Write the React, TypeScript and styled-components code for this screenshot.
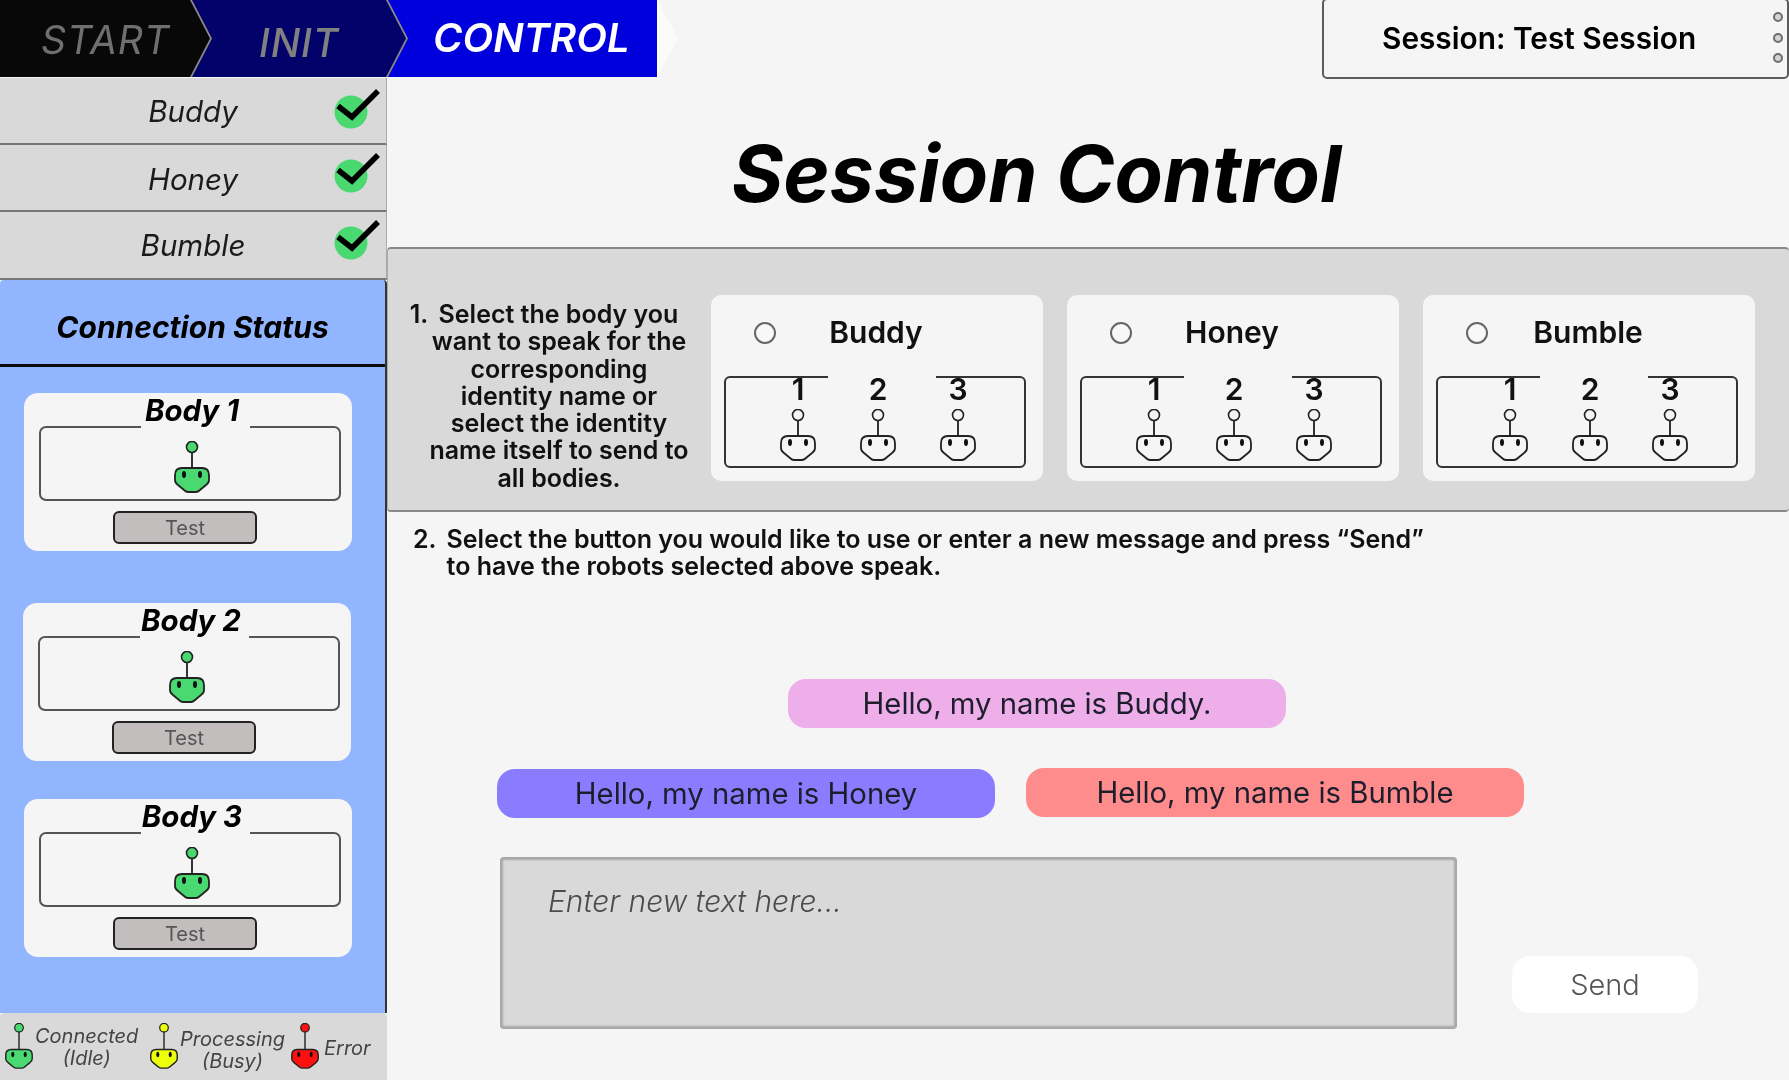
import React from "react";
import styled, { createGlobalStyle } from "styled-components";

const GlobalStyle = createGlobalStyle`
  html, body {
    margin: 0;
    padding: 0;
    background: #f5f5f5;
  }
  * {
    box-sizing: border-box;
  }
`;

const Page = styled.div`
  width: 1789px;
  height: 1080px;
  overflow: hidden;
  display: flex;
  flex-direction: column;
  background: #f5f5f5;
  color: #000;
  font-family: Inter, "Liberation Sans", sans-serif;
  filter: blur(0.6px);
`;

const TopBar = styled.header`
  height: 78px;
  flex: none;
  display: flex;
  justify-content: space-between;
  align-items: flex-start;
`;

const Steps = styled.nav`
  display: flex;
  height: 78px;
`;

/* the grey colour behind each step shows through as the chevron outline */
const Step = styled.div<{ $width: number; $offset: number; $bg: string; $color: string; $textLeft: number; $textTop: number; $size: number; $weight: number; $z: number }>`
  position: relative;
  width: ${(p) => p.$width}px;
  margin-left: ${(p) => p.$offset}px;
  height: 77px;
  z-index: ${(p) => p.$z};
  background: #8a8a8a;
  clip-path: polygon(0 0, calc(100% - 20px) 0, 100% 50%, calc(100% - 20px) 100%, 0 100%);
  color: ${(p) => p.$color};
  font-style: italic;
  font-size: ${(p) => p.$size}px;
  font-weight: ${(p) => p.$weight};
  letter-spacing: 1px;

  &::before {
    content: "";
    position: absolute;
    inset: 0 2px 0 0;
    background: ${(p) => p.$bg};
    clip-path: polygon(0 0, calc(100% - 20px) 0, 100% 50%, calc(100% - 20px) 100%, 0 100%);
  }

  span {
    position: absolute;
    left: ${(p) => p.$textLeft}px;
    top: ${(p) => p.$textTop}px;
    line-height: 1;
  }
`;

const LastStep = styled.div`
  width: 292px;
  margin-left: -22px;
  height: 77px;
  padding: 15px 0 0 47px;
  background: linear-gradient(90deg, #0000dc 271px, #fbfbfb 271px);
  clip-path: polygon(0 0, 271px 0, 100% 50%, 271px 100%, 0 100%);
  color: #fff;
  font-style: italic;
  font-weight: 600;
  font-size: 40px;
  line-height: 45px;
`;

const SessionBox = styled.div`
  width: 467px;
  height: 81px;
  margin-top: -2px;
  position: relative;
  display: flex;
  align-items: center;
  padding: 0 0 2px 58px;
  border: 2px solid #5c5c5c;
  border-radius: 5px;
  font-size: 29.8px;
  font-weight: 600;
`;

const MenuDots = styled.div`
  position: absolute;
  right: 4px;
  top: 12px;
  display: flex;
  flex-direction: column;
  gap: 10.5px;

  i {
    display: block;
    width: 10px;
    height: 10px;
    border-radius: 50%;
    background: #d4d4d4;
    border: 2px solid #6d6d6d;
  }
`;

const Content = styled.div`
  flex: 1;
  display: flex;
  min-height: 0;
`;

const Sidebar = styled.aside`
  width: 387px;
  flex: none;
  display: flex;
  flex-direction: column;
`;

const IdentityRow = styled.div<{ $height: number; $checkUp: number; $textDrop: number }>`
  height: ${(p) => p.$height}px;
  flex: none;
  display: grid;
  grid-template-columns: 1fr auto 1fr;
  align-items: center;
  background: #d9d9d9;
  border-bottom: 2px solid #777;
  border-right: 1px solid #aaa;
  font-size: 29.5px;
  font-style: italic;
  color: #1b1b1b;

  span {
    margin-top: ${(p) => p.$textDrop}px;
  }

  svg {
    justify-self: end;
    margin-right: 6px;
    margin-bottom: ${(p) => p.$checkUp * 2}px;
  }
`;

const StatusPanel = styled.div`
  flex: 1;
  min-height: 0;
  background: #91b5ff;
  border-right: 2px solid #333;
  border-radius: 4px 4px 0 0;
`;

const StatusTitle = styled.h2`
  margin: 0;
  height: 87px;
  display: flex;
  align-items: center;
  justify-content: center;
  padding-top: 10px;
  border-bottom: 3px solid #0a0a0a;
  font-size: 30px;
  font-weight: 700;
  font-style: italic;
`;

const BodyCard = styled.section<{ $top: number; $left: number; $robotShift: number }>`
  width: 328px;
  height: 158px;
  margin: ${(p) => p.$top}px 0 0 ${(p) => p.$left}px;
  padding: 0 11px 0 15px;
  background: #f5f5f5;
  border-radius: 14px;
  display: flex;
  flex-direction: column;
  align-items: center;

  svg {
    margin-left: ${(p) => p.$robotShift}px;
  }
`;

const BodyTitle = styled.h3`
  margin: 0 0 -2px 10px;
  width: 109px;
  height: 35px;
  padding-right: 6px;
  position: relative;
  z-index: 1;
  background: #f5f5f5;
  text-align: center;
  white-space: nowrap;
  font-size: 29.5px;
  line-height: 34px;
  font-weight: 700;
  font-style: italic;
`;

const BodyFrame = styled.div`
  width: 302px;
  height: 75px;
  flex: none;
  padding-top: 13px;
  display: flex;
  justify-content: center;
  border: 2px solid #555;
  border-radius: 7px;
`;

const TestButton = styled.button`
  width: 144px;
  height: 33px;
  margin: 10px 0 0 -10px;
  padding: 0;
  background: #c2bebe;
  border: 2px solid #222;
  border-radius: 6px;
  color: #555;
  font-family: inherit;
  font-size: 20px;
`;

const Legend = styled.footer`
  height: 67px;
  flex: none;
  display: flex;
  padding-left: 5px;
  background: #d9d9d9;
  border-radius: 4px 4px 0 0;
`;

const LegendItem = styled.div<{ $width: number; $drop: number; $gap: number }>`
  width: ${(p) => p.$width}px;
  padding-top: 10px;
  display: flex;
  align-items: flex-start;
  font-size: 20px;
  line-height: 22px;
  font-style: italic;
  color: #444;
  text-align: center;

  span {
    display: block;
    margin-top: ${(p) => p.$drop}px;
    margin-left: ${(p) => p.$gap}px;
  }
`;

const Main = styled.main`
  flex: 1;
  min-width: 0;
  display: flex;
  flex-direction: column;
`;

const Title = styled.h1`
  margin: 0;
  height: 169px;
  flex: none;
  padding: 20px 103px 0 0;
  display: flex;
  align-items: center;
  justify-content: center;
  font-size: 79px;
  font-weight: 700;
  font-style: italic;
`;

const SelectPanel = styled.section`
  height: 265px;
  flex: none;
  display: flex;
  align-items: center;
  padding: 16px 0 0 21px;
  background: #d9d9d9;
  border-top: 2px solid #888;
  border-bottom: 2px solid #888;
  border-left: 1px solid #aaa;
  border-radius: 4px;
`;

const StepOne = styled.p`
  width: 300px;
  margin: 18px 2px 0 0;
  flex: none;
  text-align: center;
  white-space: nowrap;
  font-size: 25px;
  line-height: 27.2px;
  font-weight: 600;
  color: #111;

  span {
    margin-right: 30px;
  }

  b {
    font-weight: inherit;
    margin-right: 4px;
  }
`;

const IdentityCards = styled.div`
  display: flex;
  gap: 24px;
`;

const IdentityCard = styled.div`
  width: 332px;
  height: 186px;
  padding: 0 15px 0 13px;
  background: #f5f5f5;
  border-radius: 10px;
`;

const CardHead = styled.div`
  height: 81px;
  display: grid;
  grid-template-columns: 1fr auto 1fr;
  align-items: center;
  padding-bottom: 6px;
  font-size: 30px;
  font-weight: 600;
  color: #111;
`;

const Radio = styled.span`
  width: 22px;
  height: 22px;
  margin-left: 30px;
  margin-top: 2px;
  border: 2px solid #666;
  border-radius: 50%;
  background: #f8f8f8;
`;

const RobotFrame = styled.div`
  position: relative;
  width: 302px;
  height: 92px;
  padding-left: 54px;
  display: flex;
  gap: 44px;
  border: 2px solid #333;
  border-radius: 6px;

  &::before {
    content: "";
    position: absolute;
    top: -2px;
    left: 102px;
    width: 108px;
    height: 2px;
    background: #f5f5f5;
  }
`;

const RobotPick = styled.div`
  width: 36px;
  display: flex;
  flex-direction: column;
  align-items: center;
  font-size: 30px;
  line-height: 22px;
  font-weight: 600;
  color: #111;

  svg {
    margin-top: 9px;
  }
`;

const StepTwo = styled.div`
  display: flex;
  gap: 10px;
  margin: 14px 0 0 26px;
  font-size: 25px;
  line-height: 27px;
  font-weight: 600;
  color: #111;

  p {
    margin: 0;
  }
`;

const Phrase = styled.button<{ $bg: string; $nudge?: number }>`
  width: 498px;
  height: 49px;
  flex: none;
  margin-top: ${(p) => p.$nudge || 0}px;
  padding: 0;
  border: none;
  border-radius: 18px;
  background: ${(p) => p.$bg};
  color: #1d1d2b;
  font-family: inherit;
  font-size: 29.3px;
`;

const PhraseRow = styled.div<{ $top: number; $left: number }>`
  display: flex;
  align-items: flex-start;
  gap: 31px;
  margin: ${(p) => p.$top}px 0 0 ${(p) => p.$left}px;
`;

const Composer = styled.div`
  display: flex;
  align-items: flex-end;
  gap: 55px;
  margin: 39px 0 0 113px;
`;

const MessageInput = styled.textarea`
  width: 957px;
  height: 172px;
  padding: 27px 48px;
  resize: none;
  border: none;
  border-radius: 4px;
  outline: none;
  background: #d9d9d9;
  box-shadow: inset 0 0 2px 3px #a8a8a8;
  font-family: inherit;
  font-size: 30px;
  font-weight: 300;
  line-height: 34px;

  &::placeholder {
    color: #4c4c4c;
    font-style: italic;
    opacity: 1;
  }
`;

const SendButton = styled.button`
  width: 186px;
  height: 57px;
  margin-bottom: 16px;
  padding: 0;
  border: none;
  border-radius: 18px;
  background: #fff;
  color: #555;
  font-family: inherit;
  font-size: 29px;
  font-weight: 300;
`;

const Check = () => (
  <svg width="46" height="40" viewBox="0 0 46 40">
    <circle cx="17" cy="23" r="16.5" fill="#49d970" />
    <path d="M4 17 L18 28 L44 2" fill="none" stroke="#000" strokeWidth="5.5" />
  </svg>
);

/* stem makes the antenna longer, the small legend robots have a longer one */
const Robot: React.FC<{ fill: string; width: number; stem?: number }> = ({ fill, width, stem = 0 }) => (
  <svg width={width} height={(width * (52 + stem)) / 36} viewBox={`0 0 36 ${52 + stem}`} style={{ flex: "none" }}>
    <path d={`M18 11 V${27 + stem}`} stroke="#333" strokeWidth="2" />
    <circle cx="18" cy="6" r="5.5" fill={fill} stroke="#222" strokeWidth="1.6" />
    <g transform={`translate(0 ${stem})`}>
      <path
        d="M8 27 H28 Q35 27 35 34 V39 Q35 42 32 44 L26 49 Q24 51 22 51 H14 Q12 51 10 49 L4 44 Q1 42 1 39 V34 Q1 27 8 27 Z"
        fill={fill}
        stroke="#222"
        strokeWidth="1.8"
      />
      <ellipse cx="10" cy="33.5" rx="2" ry="3.4" fill="#111" />
      <ellipse cx="26" cy="33.5" rx="2" ry="3.4" fill="#111" />
    </g>
  </svg>
);

const identities = ["Buddy", "Honey", "Bumble"];

const rows = [
  { name: "Buddy", height: 67, up: 2, drop: 0 },
  { name: "Honey", height: 67, up: 5, drop: 3 },
  { name: "Bumble", height: 68, up: 5, drop: 0 },
];

const bodies = [
  { name: "Body 1", top: 26, left: 24, shift: 3 },
  { name: "Body 2", top: 52, left: 23, shift: -4 },
  { name: "Body 3", top: 38, left: 24, shift: 3 },
];

const App: React.FC = () => {
  return (
    <Page>
      <GlobalStyle />
      <TopBar>
        <Steps>
          <Step $width={212} $offset={0} $bg="#080808" $color="#6f6f6f" $textLeft={41} $textTop={20} $size={39} $weight={400} $z={3}>
            <span>START</span>
          </Step>
          <Step $width={216} $offset={-20} $bg="#02026a" $color="#808080" $textLeft={67} $textTop={23} $size={39} $weight={500} $z={2}>
            <span>INIT</span>
          </Step>
          <LastStep>CONTROL</LastStep>
        </Steps>
        <SessionBox>
          Session: Test Session
          <MenuDots>
            <i />
            <i />
            <i />
          </MenuDots>
        </SessionBox>
      </TopBar>
      <Content>
        <Sidebar>
          {rows.map((r) => (
            <IdentityRow key={r.name} $height={r.height} $checkUp={r.up} $textDrop={r.drop}>
              <i />
              <span>{r.name}</span>
              <Check />
            </IdentityRow>
          ))}
          <StatusPanel>
            <StatusTitle>Connection Status</StatusTitle>
            {bodies.map((b) => (
              <BodyCard key={b.name} $top={b.top} $left={b.left} $robotShift={b.shift}>
                <BodyTitle>{b.name}</BodyTitle>
                <BodyFrame>
                  <Robot fill="#49d970" width={36} />
                </BodyFrame>
                <TestButton>Test</TestButton>
              </BodyCard>
            ))}
          </StatusPanel>
          <Legend>
            <LegendItem $width={145} $drop={2} $gap={2}>
              <Robot fill="#49d970" width={28} stem={7} />
              <span>
                Connected
                <br />
                (Idle)
              </span>
            </LegendItem>
            <LegendItem $width={141} $drop={5} $gap={2}>
              <Robot fill="#eeff0a" width={28} stem={7} />
              <span>
                Processing
                <br />
                (Busy)
              </span>
            </LegendItem>
            <LegendItem $width={90} $drop={14} $gap={5}>
              <Robot fill="#ff1010" width={28} stem={7} />
              <span>Error</span>
            </LegendItem>
          </Legend>
        </Sidebar>
        <Main>
          <Title>Session Control</Title>
          <SelectPanel>
            <StepOne>
              <span>
                <b>1.</b> Select the body you
              </span>
              <br />
              want to speak for the
              <br />
              corresponding
              <br />
              identity name or
              <br />
              select the identity
              <br />
              name itself to send to
              <br />
              all bodies.
            </StepOne>
            <IdentityCards>
              {identities.map((name) => (
                <IdentityCard key={name}>
                  <CardHead>
                    <Radio />
                    <span>{name}</span>
                    <i />
                  </CardHead>
                  <RobotFrame>
                    {[1, 2, 3].map((n) => (
                      <RobotPick key={n}>
                        {n}
                        <Robot fill="#f5f5f5" width={36} />
                      </RobotPick>
                    ))}
                  </RobotFrame>
                </IdentityCard>
              ))}
            </IdentityCards>
          </SelectPanel>
          <StepTwo>
            <span>2.</span>
            <p>
              Select the button you would like to use or enter a new message and press “Send”
              <br />
              to have the robots selected above speak.
            </p>
          </StepTwo>
          <PhraseRow $top={99} $left={401}>
            <Phrase $bg="#edaeea">Hello, my name is Buddy.</Phrase>
          </PhraseRow>
          <PhraseRow $top={41} $left={110}>
            <Phrase $bg="#8a7cff">Hello, my name is Honey</Phrase>
            <Phrase $bg="#ff8c8c" $nudge={-1}>Hello, my name is Bumble</Phrase>
          </PhraseRow>
          <Composer>
            <MessageInput placeholder="Enter new text here..." />
            <SendButton>Send</SendButton>
          </Composer>
        </Main>
      </Content>
    </Page>
  );
};

export default App;
